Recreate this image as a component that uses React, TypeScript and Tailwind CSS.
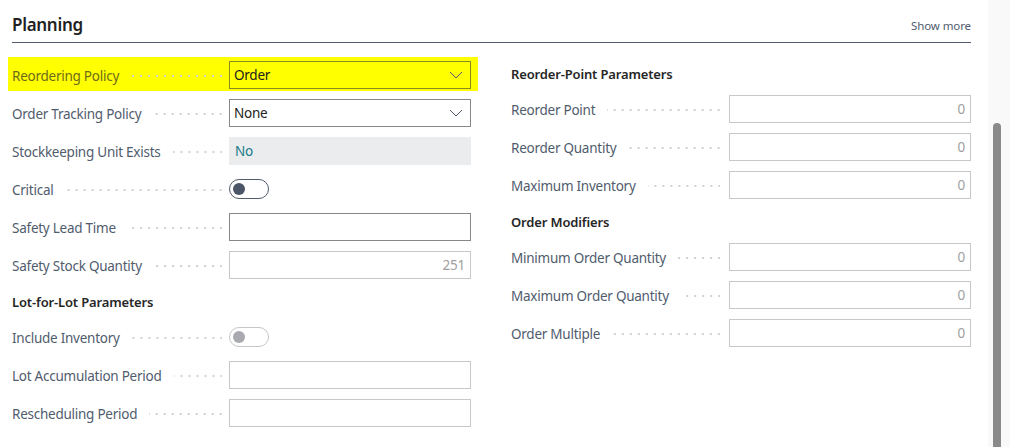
import type { ReactNode } from 'react';

// ─── Field primitives ────────────────────────────────────────────────────────

function Leader() {
	return (
		<span className="flex-1 h-[2px] ml-3 mt-[2px] bg-[linear-gradient(to_left,#d0d0d0_2px,transparent_2px)] bg-[length:8px_2px] bg-right bg-repeat-x" />
	);
}

function Chevron() {
	return (
		<svg width="14" height="8" viewBox="0 0 14 8" className="shrink-0">
			<polyline points="1,1 7,7 13,1" fill="none" stroke="#505c6d" strokeWidth="1" />
		</svg>
	);
}

function Row({
	label,
	labelClass = 'text-[#505c6d]',
	labelPad = 'pr-[7px]',
	children,
}: {
	label: string;
	labelClass?: string;
	labelPad?: string;
	children: ReactNode;
}) {
	return (
		<div className="flex items-center h-7">
			<div className={`flex items-center flex-1 min-w-0 ${labelPad}`}>
				<span className={`whitespace-nowrap pt-[2px] text-[13.5px] tracking-[-0.25px] ${labelClass}`}>
					{label}
				</span>
				<Leader />
			</div>
			<div className="w-[242px] h-7 flex items-center shrink-0">{children}</div>
		</div>
	);
}

function SelectBox({ value, border = 'border-[#8a8886]' }: { value: string; border?: string }) {
	return (
		<div className={`w-full h-full border ${border} flex items-center justify-between pl-1 pr-[7px]`}>
			<span className="pt-[1px] text-[13.5px] tracking-[-0.25px] text-[#212121]">{value}</span>
			<Chevron />
		</div>
	);
}

function TextBox({ value = '', disabled = false }: { value?: string; disabled?: boolean }) {
	return (
		<div
			className={`w-full h-full border flex items-center justify-end pt-[1px] pr-[5px] text-[13.5px] tracking-[-0.25px] ${
				disabled ? 'border-[#c8c8c8] text-[#a0a0a0]' : 'border-[#8a8886] text-[#212121]'
			}`}
		>
			{value}
		</div>
	);
}

function Toggle({ disabled = false }: { disabled?: boolean }) {
	return (
		<div
			className={`w-10 h-5 rounded-full border flex items-center pl-[3px] ${
				disabled ? 'border-[#c6c6ca]' : 'border-[#505c6d]'
			}`}
		>
			<span
				className={`w-3 h-3 rounded-full ${disabled ? 'bg-[#a9a9b0]' : 'bg-[#4a5568]'}`}
			/>
		</div>
	);
}

function GroupHeader({ children }: { children: string }) {
	return (
		<div className="h-6 flex items-center pt-[3px] text-[13px] tracking-[-0.15px] font-semibold text-[#262626]">
			{children}
		</div>
	);
}

// ─── Page ────────────────────────────────────────────────────────────────────

export default function App() {
	return (
		<div
			className="w-[1010px] h-[447px] overflow-hidden bg-white flex"
			style={{ fontFamily: '"Segoe UI", "Noto Sans", sans-serif' }}
		>
			<div className="flex-1 pl-3 pr-[17px]">
				{/* Title bar */}
				<div className="flex items-end justify-between pt-[13px] pb-[5px] border-b border-[#505c6d]">
					<span className="text-[17px] tracking-[-0.3px] leading-6 font-semibold text-[#212121]">
						Planning
					</span>
					<span className="text-[11.5px] tracking-[-0.1px] text-[#505c6d] mb-[3px]">Show more</span>
				</div>

				<div className="grid grid-cols-[459px_460px] gap-x-10 pt-[18px]">
					{/* Left column */}
					<div className="flex flex-col gap-[10px]">
						<div className="bg-[#ffff00] -ml-1 -mr-[7px] pl-1 pr-[7px] -mt-1 pt-1 -mb-0.5 pb-0.5">
							<Row label="Reordering Policy" labelClass="text-[#6e6c1a]">
								<SelectBox value="Order" border="border-[#8a8a1e]" />
							</Row>
						</div>
						<Row label="Order Tracking Policy">
							<SelectBox value="None" />
						</Row>
						<Row label="Stockkeeping Unit Exists">
							<div className="w-full h-full bg-[#eaeced] flex items-center pt-[1px] pl-[6px] text-[13.5px] tracking-[-0.25px] text-[#1a7a8c]">
								No
							</div>
						</Row>
						<Row label="Critical">
							<Toggle />
						</Row>
						<Row label="Safety Lead Time">
							<TextBox />
						</Row>
						<Row label="Safety Stock Quantity">
							<TextBox value="251" disabled />
						</Row>
						<GroupHeader>Lot-for-Lot Parameters</GroupHeader>
						<Row label="Include Inventory">
							<Toggle disabled />
						</Row>
						<Row label="Lot Accumulation Period">
							<TextBox disabled />
						</Row>
						<Row label="Rescheduling Period">
							<TextBox disabled />
						</Row>
					</div>

					{/* Right column */}
					<div className="flex flex-col gap-[10px]">
						<GroupHeader>Reorder-Point Parameters</GroupHeader>
						<Row label="Reorder Point" labelPad="pr-[9px]">
							<TextBox value="0" disabled />
						</Row>
						<Row label="Reorder Quantity" labelPad="pr-[9px]">
							<TextBox value="0" disabled />
						</Row>
						<Row label="Maximum Inventory" labelPad="pr-[9px]">
							<TextBox value="0" disabled />
						</Row>
						<GroupHeader>Order Modifiers</GroupHeader>
						<Row label="Minimum Order Quantity" labelPad="pr-[9px]">
							<TextBox value="0" disabled />
						</Row>
						<Row label="Maximum Order Quantity" labelPad="pr-[9px]">
							<TextBox value="0" disabled />
						</Row>
						<Row label="Order Multiple" labelPad="pr-[9px]">
							<TextBox value="0" disabled />
						</Row>
					</div>
				</div>
			</div>

			{/* Scrollbar */}
			<div className="w-[22px] bg-[#f9f9f9] flex justify-center pt-[123px] pl-[5px] pr-[9px]">
				<div className="w-2 h-full bg-[#8a8a8a] rounded-t-full" />
			</div>
		</div>
	);
}
